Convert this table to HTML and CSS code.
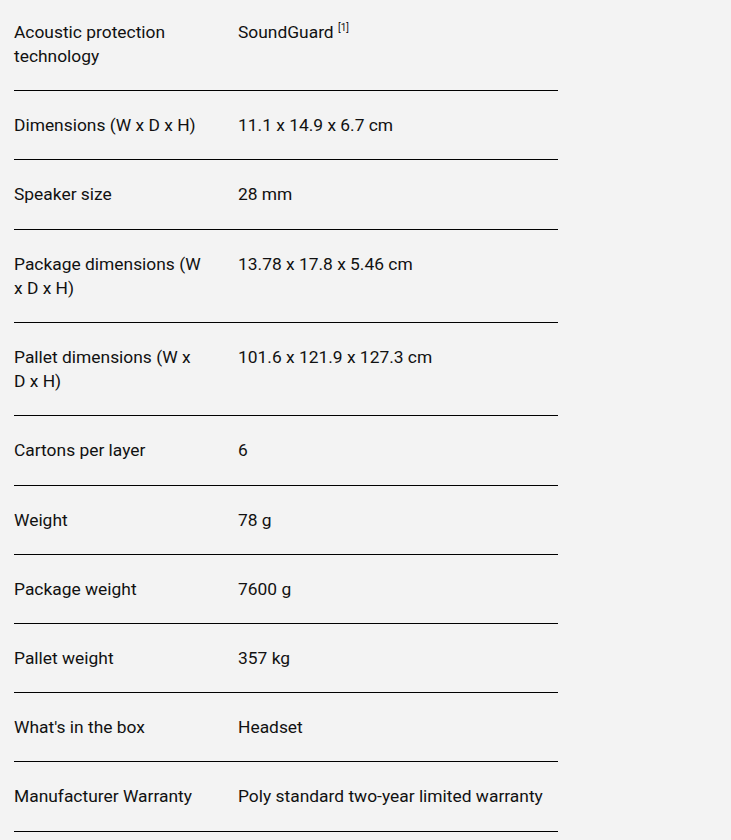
FILE: index.html
```html
<!DOCTYPE html>
<html lang="en">
<head>
<meta charset="utf-8">
<link rel="stylesheet" href="styles.css">
</head>
<body>
<dl class="specs">
  <div class="row"><dt class="label">Acoustic protection technology</dt><dd class="value">SoundGuard <sup>[1]</sup></dd></div>
  <div class="row"><dt class="label">Dimensions (W x D x H)</dt><dd class="value">11.1 x 14.9 x 6.7 cm</dd></div>
  <div class="row"><dt class="label">Speaker size</dt><dd class="value">28 mm</dd></div>
  <div class="row"><dt class="label">Package dimensions (W x D x H)</dt><dd class="value">13.78 x 17.8 x 5.46 cm</dd></div>
  <div class="row"><dt class="label">Pallet dimensions (W x D x H)</dt><dd class="value">101.6 x 121.9 x 127.3 cm</dd></div>
  <div class="row"><dt class="label">Cartons per layer</dt><dd class="value">6</dd></div>
  <div class="row"><dt class="label">Weight</dt><dd class="value">78 g</dd></div>
  <div class="row"><dt class="label">Package weight</dt><dd class="value">7600 g</dd></div>
  <div class="row"><dt class="label">Pallet weight</dt><dd class="value">357 kg</dd></div>
  <div class="row"><dt class="label">What's in the box</dt><dd class="value">Headset</dd></div>
  <div class="row"><dt class="label">Manufacturer Warranty</dt><dd class="value">Poly standard two-year limited warranty</dd></div>
</dl>
</body>
</html>
```
FILE: styles.css
```css
html, body {
  margin: 0;
  padding: 0;
  background: #f3f3f3;
}
body {
  font-family: Roboto, "Liberation Sans", sans-serif;
  font-size: 17.4px;
  line-height: 24.2px;
  color: #111;
}
.specs {
  margin: 0 0 0 14px;
  width: 544px;
}
.row {
  display: grid;
  grid-template-columns: 190px 1fr;
  column-gap: 34px;
  padding: 22px 0;
  border-bottom: 1px solid #000;
}
.row:first-child {
  padding-top: 19.8px;
}
.label,
.value {
  margin: 0;
}
.specs sup {
  font-size: 10px;
  line-height: 0;
  vertical-align: 7px;
}
```
